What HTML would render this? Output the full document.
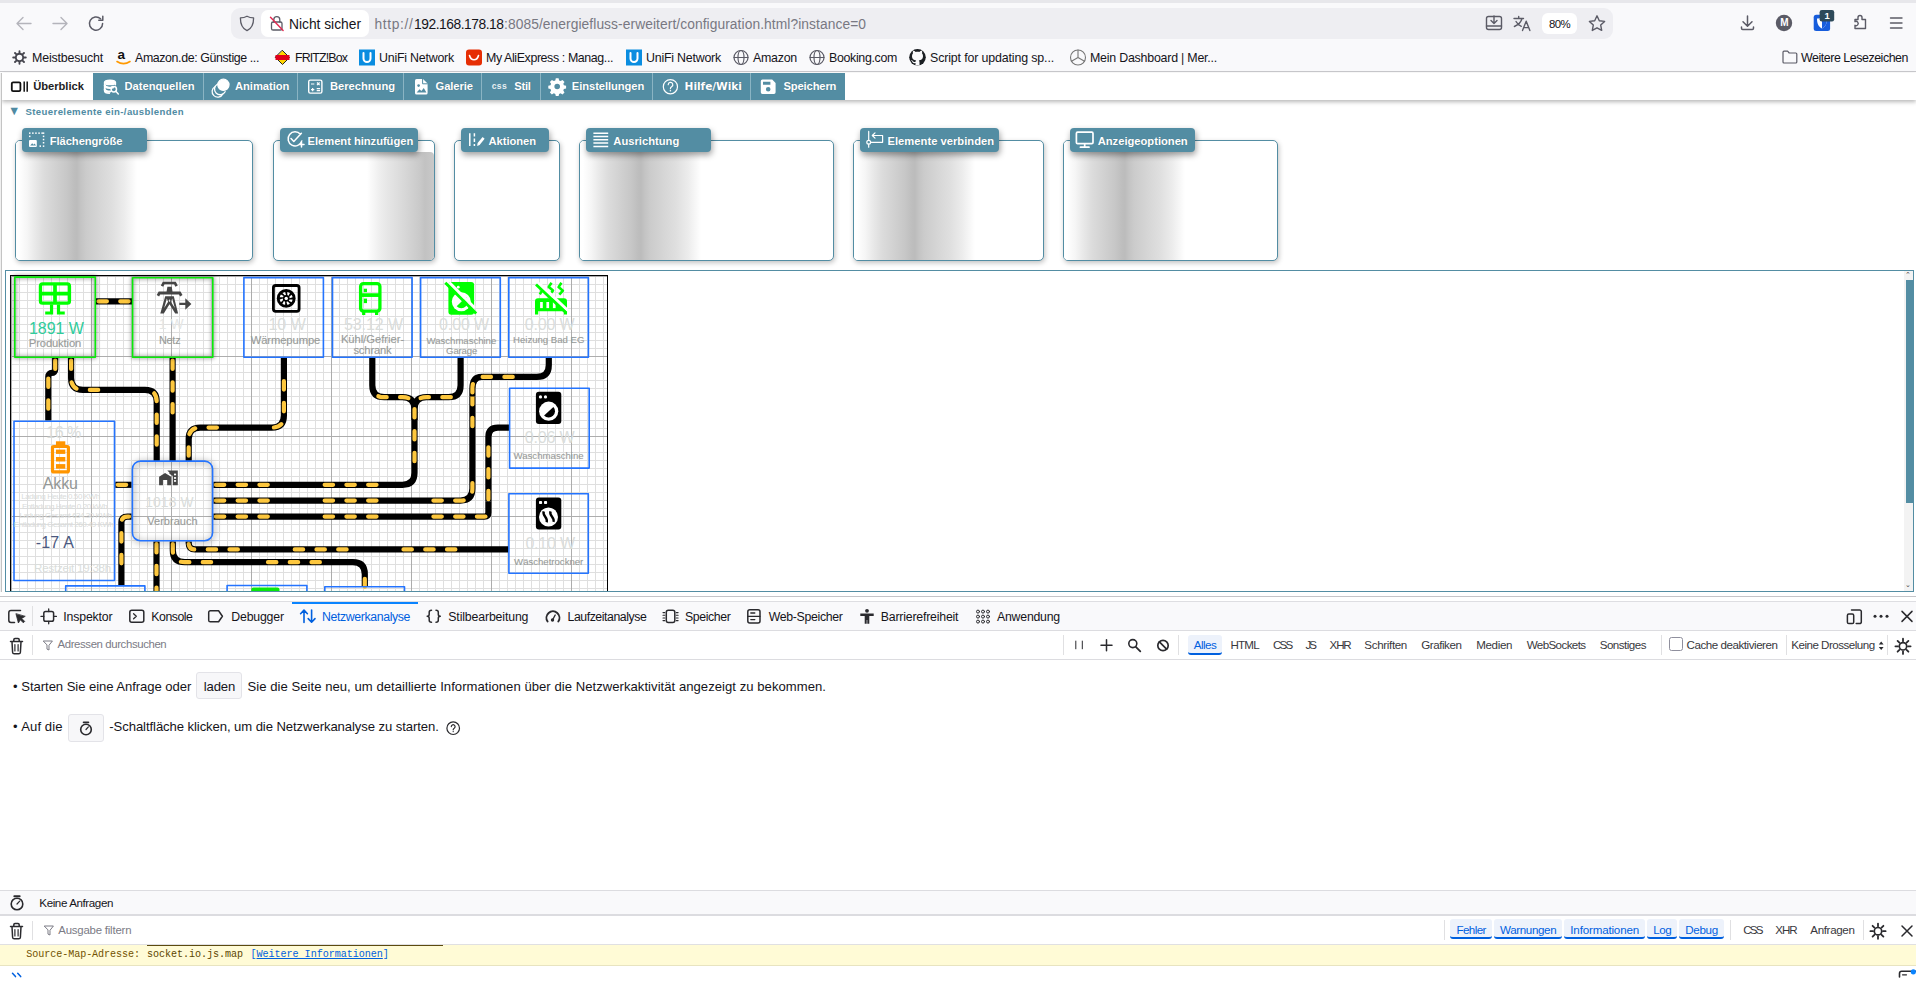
<!DOCTYPE html>
<html lang="de"><head><meta charset="utf-8"><title>energiefluss-erweitert</title>
<style>
html,body{margin:0;padding:0;}
body{width:1916px;height:997px;overflow:hidden;background:#fff;position:relative;font-family:"Liberation Sans", "DejaVu Sans", sans-serif;}
svg{position:absolute;overflow:visible;}
.ab{position:absolute;}
</style></head><body>
<div style="position:absolute;left:0px;top:0px;width:1916px;height:72px;background:#f9f9fb;"></div>
<div style="position:absolute;left:0px;top:0px;width:1916px;height:3px;background:#e7e7eb;"></div>
<div style="position:absolute;left:0px;top:71.4px;width:1916px;height:1.5px;background:#c9c9cd;"></div>
<div style="position:absolute;left:231px;top:8px;width:1382px;height:31px;background:#eeeef2;border-radius:9px;"></div>
<div style="position:absolute;left:261px;top:10px;width:108px;height:27px;background:#fff;border-radius:7px;"></div>
<div style="position:absolute;left:1542px;top:13px;width:35px;height:21px;background:#fff;border-radius:6px;"></div>
<div style="position:absolute;left:0px;top:72px;width:1916px;height:524px;background:#fff;"></div>
<div style="position:absolute;left:2px;top:73px;width:1914px;height:27px;background:#fff;box-shadow:0 2px 4px rgba(0,0,0,.28);"></div>
<div style="position:absolute;left:93px;top:73px;width:752px;height:27px;background:#538da3;"></div>
<div style="position:absolute;left:0px;top:72.8px;width:1.2px;height:523px;background:#f0f0f0;"></div>
<div style="position:absolute;left:1.1px;top:72.8px;width:0.9px;height:523px;background:#c4c4c4;"></div>
<div style="position:absolute;left:0px;top:596px;width:1916px;height:401px;background:#fff;"></div>
<div style="position:absolute;left:0px;top:596px;width:1916px;height:1.3px;background:#c4c4c8;"></div>
<div style="position:absolute;left:0px;top:600.5px;width:1916px;height:1px;background:#dedee2;"></div>
<div style="position:absolute;left:0px;top:601.5px;width:1916px;height:28.5px;background:#f9f9fb;"></div>
<div style="position:absolute;left:0px;top:630px;width:1916px;height:1px;background:#dcdce0;"></div>
<div style="position:absolute;left:0px;top:659px;width:1916px;height:1px;background:#dcdce0;"></div>
<div style="position:absolute;left:0px;top:890px;width:1916px;height:25px;background:#f9f9fb;border-top:1px solid #dcdce0;"></div>
<div style="position:absolute;left:0px;top:914px;width:1916px;height:2px;background:#dcdce0;"></div>
<div style="position:absolute;left:0px;top:944px;width:1916px;height:1px;background:#e0e0e2;"></div>
<div style="position:absolute;left:0px;top:945px;width:1916px;height:20px;background:#fffbd6;"></div>
<div style="position:absolute;left:0px;top:965px;width:1916px;height:1px;background:#e8e4c0;"></div>
<span style="position:absolute;top:17.32px;font-size:13.8px;line-height:16.56px;color:#15141a;white-space:pre;letter-spacing:-0.007px;left:289px;">Nicht sicher</span>
<span style="position:absolute;top:17.32px;font-size:13.8px;line-height:16.56px;color:#787882;white-space:pre;letter-spacing:0.641px;left:374.5px;">http://</span>
<span style="position:absolute;top:17.32px;font-size:13.8px;line-height:16.56px;color:#15141a;white-space:pre;letter-spacing:-0.458px;left:414px;">192.168.178.18</span>
<span style="position:absolute;top:17.32px;font-size:13.8px;line-height:16.56px;color:#787882;white-space:pre;letter-spacing:0.073px;left:504px;">:8085/energiefluss-erweitert/configuration.html?instance=0</span>
<span style="position:absolute;top:17.76px;font-size:11.4px;line-height:13.68px;color:#15141a;white-space:pre;letter-spacing:-0.604px;left:1549px;">80%</span>
<span style="position:absolute;top:51.06px;font-size:12.4px;line-height:14.88px;color:#15141a;white-space:pre;letter-spacing:-0.168px;left:32px;">Meistbesucht</span>
<span style="position:absolute;top:51.06px;font-size:12.4px;line-height:14.88px;color:#15141a;white-space:pre;letter-spacing:-0.389px;left:135px;">Amazon.de: Günstige ...</span>
<span style="position:absolute;top:51.06px;font-size:12.4px;line-height:14.88px;color:#15141a;white-space:pre;letter-spacing:-0.877px;left:295px;">FRITZ!Box</span>
<span style="position:absolute;top:51.06px;font-size:12.4px;line-height:14.88px;color:#15141a;white-space:pre;letter-spacing:-0.216px;left:379px;">UniFi Network</span>
<span style="position:absolute;top:51.06px;font-size:12.4px;line-height:14.88px;color:#15141a;white-space:pre;letter-spacing:-0.390px;left:486px;">My AliExpress : Manag...</span>
<span style="position:absolute;top:51.06px;font-size:12.4px;line-height:14.88px;color:#15141a;white-space:pre;letter-spacing:-0.216px;left:646px;">UniFi Network</span>
<span style="position:absolute;top:51.06px;font-size:12.4px;line-height:14.88px;color:#15141a;white-space:pre;letter-spacing:-0.245px;left:753px;">Amazon</span>
<span style="position:absolute;top:51.06px;font-size:12.4px;line-height:14.88px;color:#15141a;white-space:pre;letter-spacing:-0.331px;left:829px;">Booking.com</span>
<span style="position:absolute;top:51.06px;font-size:12.4px;line-height:14.88px;color:#15141a;white-space:pre;letter-spacing:-0.137px;left:930px;">Script for updating sp...</span>
<span style="position:absolute;top:51.06px;font-size:12.4px;line-height:14.88px;color:#15141a;white-space:pre;letter-spacing:-0.218px;left:1090px;">Mein Dashboard | Mer...</span>
<span style="position:absolute;top:51.06px;font-size:12.4px;line-height:14.88px;color:#15141a;white-space:pre;letter-spacing:-0.447px;left:1801px;">Weitere Lesezeichen</span>
<svg style="left:0;top:0" width="1916" height="72" viewBox="0 0 1916 72" fill="none" stroke-linecap="round" stroke-linejoin="round">
<!-- back / forward / reload -->
<g stroke="#b4b4bb" stroke-width="1.4"><path d="M31 23.5H17.5M23 17.5l-6 6 6 6"/><path d="M53 23.5h13.5M61 17.5l6 6-6 6"/></g>
<g stroke="#5b5b66" stroke-width="1.5"><path d="M102.6 23.5a6.6 6.6 0 1 1-2-4.7"/><path d="M102.8 16.2v4h-4" /></g>
<!-- shield -->
<path d="M247 16.2c2.2 1.3 4.3 1.7 6.6 1.7 0 6-1.6 10.400-6.600 12.700-5-2.300-6.600-6.700-6.600-12.700 2.300 0 4.400-.4 6.600-1.700z" stroke="#5b5b66" stroke-width="1.3"/>
<!-- insecure lock -->
<g stroke="#5b5b66" stroke-width="1.3"><rect x="271.500" y="22" width="10.500" height="8" rx="1.600"/><path d="M273.800 22v-2.300a3 3 0 0 1 6 0V22"/></g>
<path d="M270.500 17.200l12.600 13.200" stroke="#e22850" stroke-width="1.400"/>
<!-- save-to-pocket-like icon -->
<g stroke="#5b5b66" stroke-width="1.400"><rect x="1486.500" y="16.500" width="15" height="13" rx="2"/><path d="M1486.500 26h15M1494 16v7M1491 20.500l3 3 3-3"/></g>
<!-- translate -->
<g stroke="#5b5b66" stroke-width="1.400"><path d="M1514 18.500h9.500M1518.700 16.500v2M1522 18.500c-.8 3.300-3.500 6.200-7.600 8M1516 21.500c1.200 2.200 3 3.800 5.300 4.800"/><path d="M1522.500 30.500l3.700-9.300 3.700 9.300M1523.800 27.600h4.800"/></g>
<!-- star -->
<path d="M1597 15.800l2.300 4.900 5.300.7-3.900 3.700 1 5.300-4.700-2.600-4.700 2.600 1-5.300-3.900-3.700 5.300-.7z" stroke="#5b5b66" stroke-width="1.400"/>
<!-- download -->
<g stroke="#5b5b66" stroke-width="1.500"><path d="M1747.500 16v10M1743 21.800l4.500 4.500 4.500-4.500M1741.500 27v1.300a1.200 1.200 0 0 0 1.200 1.200h9.600a1.200 1.200 0 0 0 1.200-1.200V27"/></g>
<!-- M avatar -->
<circle cx="1784" cy="23" r="8.200" fill="#5b5b66"/>
<!-- bitwarden -->
<rect x="1813.700" y="14.700" width="16.400" height="16.400" rx="2.500" fill="#175ddc"/>
<path d="M1822 17.300c1.700.9 3.200 1.200 5 1.200 0 4.700-1.200 8-5 10-3.800-2-5-5.300-5-10 1.800 0 3.300-.3 5-1.200z" fill="#fff" stroke="none"/>
<path d="M1822 17.300c1.700.9 3.200 1.200 5 1.200 0 4.700-1.200 8-5 10z" fill="#175ddc" stroke="none"/>
<rect x="1819.600" y="10" width="14.600" height="11.400" rx="2.200" fill="#2e4a5a"/>
<!-- puzzle -->
<path d="M1855 21h3v-2a2 2 0 1 1 4 0v2h3.500v9H1855v-3.200a2.100 2.100 0 1 0 0-3.600z" stroke="#5b5b66" stroke-width="1.400" transform="translate(0,-1.5)"/>
<!-- hamburger -->
<path d="M1890.500 18h11.500M1890.500 23h11.500M1890.500 28h11.500" stroke="#5b5b66" stroke-width="1.400"/>
<!-- bookmarks: gear -->
<g transform="translate(19.500,57.500)"><circle r="3.700" stroke="#45454e" stroke-width="1.900"/><g stroke="#45454e" stroke-width="1.900"><path d="M0-6.300v1.600M0 6.300v-1.600M6.300 0h-1.600M-6.300 0h1.600M4.500-4.500l-1.200 1.200M-4.500 4.500l1.200-1.200M4.500 4.500l-1.200-1.200M-4.500-4.500l1.200 1.200"/></g></g>
<!-- amazon a -->
<path d="M117 61.500c4 2.600 9 2.600 13 0" stroke="#f90" stroke-width="1.600"/>
<!-- fritz diamond -->
<path d="M282.500 50.500l7 7-7 7-7-7z" fill="#ffd400" stroke="#222" stroke-width="1"/>
<rect x="275.500" y="55" width="14" height="5" fill="#e2001a" stroke="none"/>
<!-- unifi x2 -->
<rect x="359" y="49.500" width="16" height="16" fill="#0a8de0" stroke="none"/>
<path d="M363.500 53v5.500a3.500 3.500 0 0 0 7 0V53" stroke="#fff" stroke-width="2"/>
<rect x="626" y="49.500" width="16" height="16" fill="#0a8de0" stroke="none"/>
<path d="M630.500 53v5.500a3.500 3.500 0 0 0 7 0V53" stroke="#fff" stroke-width="2"/>
<!-- aliexpress -->
<rect x="466" y="49.500" width="16" height="16" rx="3" fill="#e62e04" stroke="none"/>
<path d="M469.500 55.500c.8 3 2.500 4.300 4.500 4.300s3.700-1.300 4.500-4.300" stroke="#fff" stroke-width="1.600"/>
<!-- globes -->
<g stroke="#5b5b66" stroke-width="1.200"><circle cx="741" cy="57.500" r="7"/><ellipse cx="741" cy="57.500" rx="3" ry="7"/><path d="M734 57.500h14"/>
<circle cx="817" cy="57.500" r="7"/><ellipse cx="817" cy="57.500" rx="3" ry="7"/><path d="M810 57.500h14"/></g>
<!-- github -->
<g transform="translate(917.500,57.300)"><circle r="8.300" fill="#1b1f23" stroke="none"/>
<path fill="#f9f9fb" stroke="none" d="M-2 8v-2.300c-2.400.600-3.200-1-3.400-1.700-.300-.600-.800-1-1.200-1.300.900-.200 1.500.500 1.900 1.100.800 1.200 1.900 1 2.700.600.100-.600.400-1 .700-1.300-2.300-.300-4.200-1.300-4.200-4.500 0-1 .400-1.900 1-2.600-.200-.600-.300-1.500.100-2.500.900 0 1.900.600 2.600 1.100 1.200-.300 2.400-.300 3.600 0 .700-.500 1.700-1.100 2.600-1.100.400 1 .300 1.900.100 2.500.600.700 1 1.600 1 2.600 0 3.200-1.900 4.200-4.200 4.500.400.400.700 1 .700 1.900v3z"/></g>
<!-- mercedes -->
<g stroke="#777" stroke-width="1.100"><circle cx="1078" cy="57.500" r="7.500"/><path d="M1078 50v7.500l6.500 3.700M1078 57.500l-6.500 3.700"/></g>
<!-- folder -->
<path d="M1783 52.200a1 1 0 0 1 1-1h3.600l1.600 1.800h6.600a1 1 0 0 1 1 1v8a1 1 0 0 1-1 1H1784a1 1 0 0 1-1-1z" stroke="#5b5b66" stroke-width="1.200"/>
</svg>
<span style="position:absolute;top:17.2px;font-size:10px;line-height:12.0px;color:#fff;white-space:pre;font-weight:700;left:1780.3px;">M</span>
<span style="position:absolute;top:10.0px;font-size:9.5px;line-height:11.4px;color:#fff;white-space:pre;font-weight:700;left:1824.6px;">1</span>
<span style="position:absolute;top:47.4px;font-size:13.5px;line-height:16.2px;color:#111;white-space:pre;font-weight:700;left:117.5px;">a</span>
<div style="position:absolute;left:203px;top:73px;width:1px;height:27px;background:#8ab4c3;"></div>
<div style="position:absolute;left:297px;top:73px;width:1px;height:27px;background:#8ab4c3;"></div>
<div style="position:absolute;left:403px;top:73px;width:1px;height:27px;background:#8ab4c3;"></div>
<div style="position:absolute;left:481px;top:73px;width:1px;height:27px;background:#8ab4c3;"></div>
<div style="position:absolute;left:540px;top:73px;width:1px;height:27px;background:#8ab4c3;"></div>
<div style="position:absolute;left:652px;top:73px;width:1px;height:27px;background:#8ab4c3;"></div>
<div style="position:absolute;left:750px;top:73px;width:1px;height:27px;background:#8ab4c3;"></div>
<span style="position:absolute;top:79.88px;font-size:11.2px;line-height:13.44px;color:#222;white-space:pre;font-weight:700;letter-spacing:-0.054px;left:33.3px;">Überblick</span>
<span style="position:absolute;top:79.88px;font-size:11.2px;line-height:13.44px;color:#fff;white-space:pre;font-weight:700;letter-spacing:-0.021px;left:124.5px;text-shadow:0 0 1px rgba(0,0,0,.25);">Datenquellen</span>
<span style="position:absolute;top:79.88px;font-size:11.2px;line-height:13.44px;color:#fff;white-space:pre;font-weight:700;letter-spacing:-0.045px;left:235px;text-shadow:0 0 1px rgba(0,0,0,.25);">Animation</span>
<span style="position:absolute;top:79.88px;font-size:11.2px;line-height:13.44px;color:#fff;white-space:pre;font-weight:700;letter-spacing:-0.028px;left:330px;text-shadow:0 0 1px rgba(0,0,0,.25);">Berechnung</span>
<span style="position:absolute;top:79.88px;font-size:11.2px;line-height:13.44px;color:#fff;white-space:pre;font-weight:700;letter-spacing:-0.065px;left:435.5px;text-shadow:0 0 1px rgba(0,0,0,.25);">Galerie</span>
<span style="position:absolute;top:79.88px;font-size:11.2px;line-height:13.44px;color:#fff;white-space:pre;font-weight:700;letter-spacing:-0.302px;left:514.3px;text-shadow:0 0 1px rgba(0,0,0,.25);">Stil</span>
<span style="position:absolute;top:79.88px;font-size:11.2px;line-height:13.44px;color:#fff;white-space:pre;font-weight:700;letter-spacing:-0.066px;left:571.8px;text-shadow:0 0 1px rgba(0,0,0,.25);">Einstellungen</span>
<span style="position:absolute;top:79.88px;font-size:11.2px;line-height:13.44px;color:#fff;white-space:pre;font-weight:700;letter-spacing:-0.144px;left:783.5px;text-shadow:0 0 1px rgba(0,0,0,.25);">Speichern</span>
<span style="position:absolute;top:81.14px;font-size:8.6px;line-height:10.32px;color:#e8f0f3;white-space:pre;font-weight:700;letter-spacing:0.285px;left:491.8px;">css</span>
<span style="position:absolute;top:105.54px;font-size:9.6px;line-height:11.52px;color:#4f8ba3;white-space:pre;font-weight:700;letter-spacing:0.378px;left:25.5px;">Steuerelemente ein-/ausblenden</span>
<span style="position:absolute;top:105.44px;font-size:9.6px;line-height:11.52px;color:#4f8ba3;white-space:pre;font-family:'DejaVu Sans', sans-serif;left:10.5px;">▼</span>
<div style="position:absolute;left:15px;top:140px;width:238px;height:121px;border:1px solid #538da3;border-radius:5px;box-sizing:border-box;box-shadow:1px 2px 5px rgba(0,0,0,.24);overflow:hidden;background:#fff"><div style="position:absolute;left:0;top:0;width:122px;height:120px;background:linear-gradient(90deg,#fff 0px,#fff 3px,#f6f6f6 11px,#e9e9e9 19px,#dcdcdc 28px,#d1d1d1 40px,#c7c7c7 51px,#bebebe 58px,#bcbcbc 61px,#c4c4c4 65px,#cbcbcb 70px,#d6d6d6 84px,#dfdfdf 96px,#ececec 108px,#fff 121px)"></div></div>
<div style="position:absolute;left:22px;top:128px;width:125px;height:23.5px;background:#538da3;border-radius:4px;box-shadow:1px 3px 6px rgba(0,0,0,.38)"></div>
<span style="position:absolute;top:134.98px;font-size:11.2px;line-height:13.44px;color:#fff;white-space:pre;font-weight:700;letter-spacing:-0.055px;left:49.7px;text-shadow:0 0 1px rgba(0,0,0,.25);">Flächengröße</span>
<div style="position:absolute;left:273px;top:140px;width:162px;height:121px;border:1px solid #538da3;border-radius:5px;box-sizing:border-box;box-shadow:1px 2px 5px rgba(0,0,0,.24);overflow:hidden;background:#fff"><div style="position:absolute;left:93px;top:11.2px;width:67px;height:108px;border-radius:0 4px 0 0;background:linear-gradient(90deg,#fff 0px,#efefef 12px,#e6e6e6 21px,#d8d8d8 37px,#c9c9c9 53px,#c2c2c2 58px,#c9c9c9 67px)"></div></div>
<div style="position:absolute;left:280px;top:128px;width:138px;height:23.5px;background:#538da3;border-radius:4px;box-shadow:1px 3px 6px rgba(0,0,0,.38)"></div>
<span style="position:absolute;top:134.98px;font-size:11.2px;line-height:13.44px;color:#fff;white-space:pre;font-weight:700;letter-spacing:-0.038px;left:307.6px;text-shadow:0 0 1px rgba(0,0,0,.25);">Element hinzufügen</span>
<div style="position:absolute;left:454px;top:140px;width:106px;height:121px;border:1px solid #538da3;border-radius:5px;box-sizing:border-box;box-shadow:1px 2px 5px rgba(0,0,0,.24);overflow:hidden;background:#fff"></div>
<div style="position:absolute;left:461px;top:128px;width:88px;height:23.5px;background:#538da3;border-radius:4px;box-shadow:1px 3px 6px rgba(0,0,0,.38)"></div>
<span style="position:absolute;top:134.98px;font-size:11.2px;line-height:13.44px;color:#fff;white-space:pre;font-weight:700;letter-spacing:-0.045px;left:488.5px;text-shadow:0 0 1px rgba(0,0,0,.25);">Aktionen</span>
<div style="position:absolute;left:579px;top:140px;width:255px;height:121px;border:1px solid #538da3;border-radius:5px;box-sizing:border-box;box-shadow:1px 2px 5px rgba(0,0,0,.24);overflow:hidden;background:#fff"><div style="position:absolute;left:0;top:0;width:122px;height:120px;background:linear-gradient(90deg,#fff 0px,#fff 3px,#f6f6f6 11px,#e9e9e9 19px,#dcdcdc 28px,#d1d1d1 40px,#c7c7c7 51px,#bebebe 58px,#bcbcbc 61px,#c4c4c4 65px,#cbcbcb 70px,#d6d6d6 84px,#dfdfdf 96px,#ececec 108px,#fff 121px)"></div></div>
<div style="position:absolute;left:586px;top:128px;width:125px;height:23.5px;background:#538da3;border-radius:4px;box-shadow:1px 3px 6px rgba(0,0,0,.38)"></div>
<span style="position:absolute;top:134.98px;font-size:11.2px;line-height:13.44px;color:#fff;white-space:pre;font-weight:700;letter-spacing:0.010px;left:613.3px;text-shadow:0 0 1px rgba(0,0,0,.25);">Ausrichtung</span>
<div style="position:absolute;left:853px;top:140px;width:191px;height:121px;border:1px solid #538da3;border-radius:5px;box-sizing:border-box;box-shadow:1px 2px 5px rgba(0,0,0,.24);overflow:hidden;background:#fff"><div style="position:absolute;left:0;top:0;width:122px;height:120px;background:linear-gradient(90deg,#fff 0px,#fff 3px,#f6f6f6 11px,#e9e9e9 19px,#dcdcdc 28px,#d1d1d1 40px,#c7c7c7 51px,#bebebe 58px,#bcbcbc 61px,#c4c4c4 65px,#cbcbcb 70px,#d6d6d6 84px,#dfdfdf 96px,#ececec 108px,#fff 121px)"></div></div>
<div style="position:absolute;left:860px;top:128px;width:139.29999999999995px;height:23.5px;background:#538da3;border-radius:4px;box-shadow:1px 3px 6px rgba(0,0,0,.38)"></div>
<span style="position:absolute;top:134.98px;font-size:11.2px;line-height:13.44px;color:#fff;white-space:pre;font-weight:700;letter-spacing:0.015px;left:887.5px;text-shadow:0 0 1px rgba(0,0,0,.25);">Elemente verbinden</span>
<div style="position:absolute;left:1063px;top:140px;width:215px;height:121px;border:1px solid #538da3;border-radius:5px;box-sizing:border-box;box-shadow:1px 2px 5px rgba(0,0,0,.24);overflow:hidden;background:#fff"><div style="position:absolute;left:0;top:0;width:122px;height:120px;background:linear-gradient(90deg,#fff 0px,#fff 3px,#f6f6f6 11px,#e9e9e9 19px,#dcdcdc 28px,#d1d1d1 40px,#c7c7c7 51px,#bebebe 58px,#bcbcbc 61px,#c4c4c4 65px,#cbcbcb 70px,#d6d6d6 84px,#dfdfdf 96px,#ececec 108px,#fff 121px)"></div></div>
<div style="position:absolute;left:1070px;top:128px;width:124.59999999999991px;height:23.5px;background:#538da3;border-radius:4px;box-shadow:1px 3px 6px rgba(0,0,0,.38)"></div>
<span style="position:absolute;top:134.98px;font-size:11.2px;line-height:13.44px;color:#fff;white-space:pre;font-weight:700;letter-spacing:-0.008px;left:1097.7px;text-shadow:0 0 1px rgba(0,0,0,.25);">Anzeigeoptionen</span>
<div style="position:absolute;left:5px;top:270px;width:1909px;height:322px;border:1px solid #538da3;box-sizing:border-box;background:#fff;"></div>
<div style="position:absolute;left:1904px;top:271px;width:9px;height:320px;background:#f3f3f3;"></div>
<div style="position:absolute;left:1905.5px;top:279.5px;width:8px;height:223px;background:#538da3;"></div>
<span style="position:absolute;top:271.3px;font-size:7px;line-height:8.4px;color:#444;white-space:pre;font-family:'DejaVu Sans', sans-serif;left:1905px;">⌃</span>
<span style="position:absolute;top:580.8px;font-size:7px;line-height:8.4px;color:#444;white-space:pre;font-family:'DejaVu Sans', sans-serif;left:1905px;">⌄</span>
<span style="position:absolute;top:80.44px;font-size:10.6px;line-height:12.72px;color:#fff;white-space:pre;font-weight:700;font-family:'DejaVu Sans', sans-serif;letter-spacing:-0.050px;left:684.6px;text-shadow:0 0 1px rgba(0,0,0,.25);">Hilfe/Wiki</span>
<svg style="left:0;top:72px" width="1300" height="90" viewBox="0 72 1300 90" fill="none" stroke-linecap="round" stroke-linejoin="round">
<!-- ueberblick -->
<g stroke="#111" stroke-width="1.8"><rect x="11.800" y="82.300" width="8.600" height="8.800" rx="1.300"/><path d="M24.200 81.500v10.300M27.200 81.500v10.300" stroke-width="1.500" stroke-linecap="butt"/></g>
<!-- datenquellen: db + magnifier -->
<g stroke="#fff" stroke-width="1.500"><ellipse cx="110" cy="82.400" rx="5.400" ry="2.200" fill="#fff"/><path d="M104.900 85.600c0 1.200 2.300 2.200 5.100 2.200 1 0 2-.1 2.800-.4M104.900 89.400c0 1.200 2.300 2.200 5.100 2.200" stroke-width="2.300"/><path d="M104.600 82.400v8.600c0 1.200 2.200 2.200 4.800 2.200M115.400 82.400v2.400"/><circle cx="113.800" cy="89.200" r="2.700"/><path d="M115.800 91.300l2.500 2.600"/></g>
<!-- animation: overlapping circles -->
<g stroke="#fff" stroke-width="1.300"><circle cx="223.400" cy="84.800" r="5.600" fill="#fff"/><path d="M217.300 84.300a5.600 5.600 0 1 0 7.800 7.400"/><path d="M214.900 86.700a5.600 5.600 0 1 0 7.800 7.400"/></g>
<!-- berechnung: calculator -->
<g stroke="#fff" stroke-width="1.400"><rect x="308.700" y="80.100" width="13.200" height="13" rx="1.600"/></g>
<g stroke="#fff" stroke-width="1.200" stroke-linecap="butt"><path d="M311 84h3.300M317 82.500l2.600 2.600M319.600 82.500l-2.600 2.600M311 89.600h3.300M312.650 87.900v3.400M316.700 88.600h3.400M316.700 90.600h3.400"/></g>
<!-- galerie: file w/ picture -->
<path d="M416.600 79h6.400l4.600 4.600v9.300a1.600 1.600 0 0 1-1.600 1.600h-9.400a1.600 1.600 0 0 1-1.600-1.600V80.600a1.600 1.600 0 0 1 1.600-1.600z" fill="#fff"/>
<path d="M422.600 79.200v4.600h4.800" stroke="#538da3" stroke-width="1"/>
<circle cx="418.600" cy="85.600" r="1.300" fill="#538da3"/><path d="M416.600 92.600l3-3.400 1.800 1.800 2.400-3 2.600 4.600z" fill="#538da3"/>
<!-- gear -->
<g transform="translate(557.200,86.500)"><path fill="#fff" fill-rule="evenodd" d="M-1.400-8.200h2.800l.5 2.200 1.500.6 1.900-1.200 2 2-1.200 1.900.6 1.500 2.200.5v2.800l-2.200.5-.6 1.500 1.200 1.900-2 2-1.900-1.200-1.500.6-.5 2.200h-2.800l-.5-2.200-1.500-.6-1.900 1.200-2-2 1.200-1.900-.6-1.500-2.200-.5v-2.800l2.200-.5.6-1.500-1.200-1.900 2-2 1.900 1.200 1.500-.6zM0-2.800a2.800 2.800 0 1 0 0 5.600 2.800 2.800 0 0 0 0-5.600z"/></g>
<!-- help -->
<g stroke="#fff" stroke-width="1.200"><circle cx="670.400" cy="86.700" r="7.100"/><path d="M668.200 84.700a2.300 2.300 0 1 1 3.400 2c-.8.500-1.200 1-1.200 2"/></g><circle cx="670.400" cy="90.800" r=".8" fill="#fff"/>
<!-- save -->
<path fill="#fff" fill-rule="evenodd" d="M762.400 79.600h9.800l3.400 3.400v9.300a1.600 1.600 0 0 1-1.600 1.600h-11.600a1.600 1.600 0 0 1-1.600-1.600V81.200a1.600 1.600 0 0 1 1.600-1.600zM763 81.700v3h7.400v-3zM768.200 87a2.300 2.300 0 1 0 0 4.600 2.300 2.300 0 0 0 0-4.600z"/>

<!-- flaechengroesse: photo_size_select_small -->
<g fill="#fff"><rect x="29" y="140" width="7.800" height="7" rx="1"/>
<rect x="29" y="132.400" width="1.500" height="1.500"/><rect x="32.100" y="132.400" width="1.500" height="1.500"/><rect x="35.200" y="132.400" width="1.500" height="1.500"/><rect x="38.300" y="132.400" width="1.500" height="1.500"/><rect x="41.400" y="132.400" width="1.500" height="1.500"/><rect x="42.800" y="132.400" width="1.500" height="1.500"/>
<rect x="42.800" y="135.600" width="1.500" height="1.500"/><rect x="42.800" y="138.800" width="1.500" height="1.500"/><rect x="42.800" y="142" width="1.500" height="1.500"/><rect x="42.800" y="145.400" width="1.500" height="1.500"/><rect x="39.500" y="145.400" width="1.500" height="1.500"/><rect x="29" y="135.600" width="1.500" height="1.500"/></g>
<path d="M30.200 145.600l2-2.400 1.400 1.600 1-1.200 1.400 2z" fill="#538da3"/>
<!-- element hinzufuegen: add_task -->
<g stroke="#fff" stroke-width="1.500"><path d="M300.400 134.300a7 7 0 1 0 1.400 6.600M291 138.600l2.800 2.900 7.600-8.200M301.500 142v5M299 144.500h5"/></g>
<!-- aktionen -->
<g stroke="#fff" stroke-width="1.500" stroke-linecap="butt"><path d="M469.800 133.200v12.800"/><path d="M474.400 133.200v12.800" stroke-dasharray="3.400 2"/></g>
<path d="M477.200 146l.4-2.900 5-6.200 2 1.800-5 6.200z" fill="#fff"/>
<!-- ausrichtung -->
<g stroke="#fff" stroke-width="1.500" stroke-linecap="butt"><path d="M593.400 133.200h14.800M593.400 136.500h14.800M593.400 139.800h14.800M593.400 143.100h14.800M593.400 146.400h14.800"/></g>
<!-- elemente verbinden -->
<g stroke="#fff" stroke-width="1.200"><path d="M868.700 131.400v9M868.700 144.200v3"/><circle cx="868.700" cy="142.300" r="1.900"/><path d="M870.800 142.300h11.800v-6.800h-10.300M875 132.800l-2.700 2.700 2.700 2.700"/></g>
<!-- anzeigeoptionen: monitor -->
<g stroke="#fff" stroke-width="1.700"><rect x="1076.400" y="132.200" width="16.600" height="11.400" rx="1.200"/><path d="M1084.700 144v2.800M1080.400 147.200h8.600"/></g>
</svg>
<div style="position:absolute;left:9.8px;top:275px;width:598.6px;height:316.5px;box-sizing:border-box;border:1.6px solid #000;border-bottom:none;"></div>
<div style="position:absolute;left:11px;top:276px;width:596px;height:315.5px;background-image:linear-gradient(to right,#adadad 1px,transparent 1px),linear-gradient(to bottom,#adadad 1px,transparent 1px),linear-gradient(to right,#dfdfdf 1px,transparent 1px),linear-gradient(to bottom,#dfdfdf 1px,transparent 1px);background-size:80px 80px,80px 80px,8px 8px,8px 8px;"></div>
<svg style="left:0;top:0;overflow:hidden" width="1916" height="591.5" viewBox="0 0 1916 591.5" fill="none" stroke-linejoin="round">
<path d="M96 301.3H132" stroke="#000" stroke-width="6.2"/>
<path d="M96 301.3H132" stroke="#fdc73e" stroke-width="4.2" stroke-linecap="round" stroke-dasharray="8.4 13.35 8.4 13.35 8.4 56.85" stroke-dashoffset="-2.50"/>
<path d="M55.2 358V369.5a3.45 3.45 0 0 1-3.45 3.45a3.45 3.45 0 0 0-3.45 3.45V420.5" stroke="#000" stroke-width="6.2"/>
<path d="M55.2 358V369.5a3.45 3.45 0 0 1-3.45 3.45a3.45 3.45 0 0 0-3.45 3.45V420.5" stroke="#fdc73e" stroke-width="4.2" stroke-linecap="round" stroke-dasharray="8.4 13.35 8.4 13.35 8.4 56.85" stroke-dashoffset="-2.50"/>
<path d="M71.1 358V378Q71.1 389.9 83 389.9H145Q156.7 389.9 156.7 401.6V461" stroke="#000" stroke-width="6.2"/>
<path d="M71.1 358V378Q71.1 389.9 83 389.9H145Q156.7 389.9 156.7 401.6V461" stroke="#fdc73e" stroke-width="4.2" stroke-linecap="round" stroke-dasharray="8.4 13.35 8.4 13.35 8.4 56.85" stroke-dashoffset="-2.50"/>
<path d="M172.6 358V461" stroke="#000" stroke-width="6.2"/>
<path d="M172.6 358V461" stroke="#fdc73e" stroke-width="4.2" stroke-linecap="round" stroke-dasharray="8.4 13.35 8.4 13.35 8.4 56.85" stroke-dashoffset="-2.50"/>
<path d="M188.7 461V439Q188.7 427.6 200.2 427.6H272Q283.9 427.6 283.9 415.5V358" stroke="#000" stroke-width="6.2"/>
<path d="M188.7 461V439Q188.7 427.6 200.2 427.6H272Q283.9 427.6 283.9 415.5V358" stroke="#fdc73e" stroke-width="4.2" stroke-linecap="round" stroke-dasharray="8.4 13.35 8.4 13.35 8.4 56.85" stroke-dashoffset="-5.30"/>
<path d="M213.4 484.8H402.5Q414.5 484.8 414.5 472.8V420" stroke="#000" stroke-width="6.2"/>
<path d="M213.4 484.8H402.5Q414.5 484.8 414.5 472.8V420" stroke="#fdc73e" stroke-width="4.2" stroke-linecap="round" stroke-dasharray="8.4 13.35 8.4 13.35 8.4 56.85" stroke-dashoffset="-2.50"/>
<path d="M414.5 420V409Q414.5 397.2 402.5 397.2H384.3Q372.3 397.2 372.3 385.2V358" stroke="#000" stroke-width="6.2"/>
<path d="M414.5 420V409Q414.5 397.2 402.5 397.2H384.3Q372.3 397.2 372.3 385.2V358" stroke="#fdc73e" stroke-width="4.2" stroke-linecap="round" stroke-dasharray="8.4 13.35 8.4 13.35 8.4 56.85" stroke-dashoffset="-2.50"/>
<path d="M414.5 420V409Q414.5 397.2 426.5 397.2H448.6Q460.6 397.2 460.6 385.2V358" stroke="#000" stroke-width="6.2"/>
<path d="M414.5 420V409Q414.5 397.2 426.5 397.2H448.6Q460.6 397.2 460.6 385.2V358" stroke="#fdc73e" stroke-width="4.2" stroke-linecap="round" stroke-dasharray="8.4 13.35 8.4 13.35 8.4 56.85" stroke-dashoffset="-2.50"/>
<path d="M213.4 500.6H460.4Q472.4 500.6 472.4 488.6V396.4" stroke="#000" stroke-width="6.2"/>
<path d="M213.4 500.6H460.4Q472.4 500.6 472.4 488.6V396.4" stroke="#fdc73e" stroke-width="4.2" stroke-linecap="round" stroke-dasharray="8.4 13.35 8.4 13.35 8.4 56.85" stroke-dashoffset="-2.50"/>
<path d="M472.4 396.4V388.9Q472.4 376.9 481.5 376.9H536.8Q548.8 376.9 548.8 364.9V358" stroke="#000" stroke-width="6.2"/>
<path d="M472.4 396.4V388.9Q472.4 376.9 481.5 376.9H536.8Q548.8 376.9 548.8 364.9V358" stroke="#fdc73e" stroke-width="4.2" stroke-linecap="round" stroke-dasharray="8.4 13.35 8.4 13.35 8.4 56.85" stroke-dashoffset="-3.95"/>
<path d="M213.4 516.6H484.4Q488.4 516.6 488.4 512.6V501.7" stroke="#000" stroke-width="6.2"/>
<path d="M213.4 516.6H484.4Q488.4 516.6 488.4 512.6V501.7" stroke="#fdc73e" stroke-width="4.2" stroke-linecap="round" stroke-dasharray="8.4 13.35 8.4 13.35 8.4 56.85" stroke-dashoffset="-2.50"/>
<path d="M488.4 501.7V437.2Q488.4 427.7 497.9 427.7H509" stroke="#000" stroke-width="6.2"/>
<path d="M488.4 501.7V437.2Q488.4 427.7 497.9 427.7H509" stroke="#fdc73e" stroke-width="4.2" stroke-linecap="round" stroke-dasharray="8.4 13.35 8.4 13.35 8.4 56.85" stroke-dashoffset="-2.50"/>
<path d="M188.7 541.5V543Q188.7 549.4 195.1 549.4H508.5" stroke="#000" stroke-width="6.2"/>
<path d="M188.7 541.5V543Q188.7 549.4 195.1 549.4H508.5" stroke="#fdc73e" stroke-width="4.2" stroke-linecap="round" stroke-dasharray="8.4 13.35 8.4 13.35 8.4 56.85" stroke-dashoffset="-2.50"/>
<path d="M172.8 541.5V550.2Q172.8 562.2 184.8 562.2H352.8Q364.8 562.2 364.8 574.2V587" stroke="#000" stroke-width="6.2"/>
<path d="M172.8 541.5V550.2Q172.8 562.2 184.8 562.2H352.8Q364.8 562.2 364.8 574.2V587" stroke="#fdc73e" stroke-width="4.2" stroke-linecap="round" stroke-dasharray="8.4 13.35 8.4 13.35 8.4 56.85" stroke-dashoffset="-2.50"/>
<path d="M156.5 541.5V591" stroke="#000" stroke-width="6.2"/>
<path d="M156.5 541.5V591" stroke="#fdc73e" stroke-width="4.2" stroke-linecap="round" stroke-dasharray="8.4 13.35 8.4 13.35 8.4 56.85" stroke-dashoffset="-2.50"/>
<path d="M115.3 484.8H131.6" stroke="#000" stroke-width="6.2"/>
<path d="M115.3 484.8H131.6" stroke="#fdc73e" stroke-width="4.2" stroke-linecap="round" stroke-dasharray="8.4 13.35 8.4 13.35 8.4 56.85" stroke-dashoffset="-2.50"/>
<path d="M131.6 516.6H127.4Q121.4 516.6 121.4 522.6V585" stroke="#000" stroke-width="6.2"/>
<path d="M131.6 516.6H127.4Q121.4 516.6 121.4 522.6V585" stroke="#fdc73e" stroke-width="4.2" stroke-linecap="round" stroke-dasharray="8.4 13.35 8.4 13.35 8.4 56.85" stroke-dashoffset="-2.50"/>
<rect x="14.8" y="277.1" width="80.5" height="80.1" rx="0" stroke="#08ec08" stroke-width="1.6" style="filter:drop-shadow(0.8px 0.8px 2.2px rgba(0,0,0,.75))"/>
<rect x="132.6" y="277.8" width="80.2" height="79.4" rx="0" stroke="#08ec08" stroke-width="1.6" style="filter:drop-shadow(0.8px 0.8px 2.2px rgba(0,0,0,.75))"/>
<rect x="243.9" y="277.6" width="79.5" height="79.6" rx="0" stroke="#2474ff" stroke-width="1.6" />
<rect x="332.5" y="277.6" width="79.6" height="79.6" rx="0" stroke="#2474ff" stroke-width="1.6" />
<rect x="420.6" y="277.6" width="79.7" height="79.6" rx="0" stroke="#2474ff" stroke-width="1.6" />
<rect x="508.8" y="277.6" width="79.6" height="79.6" rx="0" stroke="#2474ff" stroke-width="1.6" />
<rect x="509.6" y="388.2" width="79.6" height="79.9" rx="0" stroke="#2474ff" stroke-width="1.6" />
<rect x="508.9" y="493.7" width="79.4" height="79.6" rx="0" stroke="#2474ff" stroke-width="1.6" />
<rect x="14.0" y="421.2" width="100.5" height="159.3" rx="0" stroke="#2474ff" stroke-width="1.6" />
<rect x="132.4" y="461.1" width="80.2" height="79.6" rx="8" stroke="#2474ff" stroke-width="1.6" style="filter:drop-shadow(1px 1.5px 3px rgba(0,0,0,.6))"/>
<rect x="65.7" y="585.9" width="79.2" height="13.3" rx="0" stroke="#2474ff" stroke-width="1.6" />
<rect x="227.1" y="585.5" width="79.8" height="13.7" rx="0" stroke="#2474ff" stroke-width="1.6" />
<rect x="324.8" y="586.8" width="79.7" height="12.4" rx="0" stroke="#2474ff" stroke-width="1.6" />
<path d="M251.3 591v-1.5a2 2 0 0 1 2-2h24.2a2 2 0 0 1 2 2v1.5z" fill="#0be80b"/>
</svg>
<div style="position:absolute;left:0px;top:592px;width:1916px;height:4px;background:#fff;"></div>
<div style="position:absolute;left:5px;top:591px;width:1909px;height:1px;background:#538da3;"></div>
<span style="position:absolute;top:319.2px;font-size:16px;line-height:19.2px;color:#2fcc9b;white-space:pre;letter-spacing:-0.040px;left:29.0px;">1891 W</span>
<span style="position:absolute;top:336.58px;font-size:11.2px;line-height:13.44px;color:#999c9a;white-space:pre;letter-spacing:-0.110px;left:28.8px;text-shadow:0 0 1px rgba(0,0,0,.12);">Produktion</span>
<span style="position:absolute;top:317.12px;font-size:13.8px;line-height:16.56px;color:#e4e6e5;white-space:pre;letter-spacing:0.090px;left:158.8px;">1 W</span>
<span style="position:absolute;top:333.62px;font-size:10.8px;line-height:12.96px;color:#999c9a;white-space:pre;letter-spacing:-0.176px;left:158.9px;text-shadow:0 0 1px rgba(0,0,0,.12);">Netz</span>
<span style="position:absolute;top:314.9px;font-size:16px;line-height:19.2px;color:#dadddb;white-space:pre;letter-spacing:0.014px;left:268.4px;">10 W</span>
<span style="position:absolute;top:333.58px;font-size:11.2px;line-height:13.44px;color:#999c9a;white-space:pre;letter-spacing:-0.077px;left:250.7px;text-shadow:0 0 1px rgba(0,0,0,.12);">Wärmepumpe</span>
<span style="position:absolute;top:314.9px;font-size:16px;line-height:19.2px;color:#dadddb;white-space:pre;letter-spacing:-0.099px;left:344px;">53.12 W</span>
<span style="position:absolute;top:332.78px;font-size:11.2px;line-height:13.44px;color:#999c9a;white-space:pre;letter-spacing:-0.009px;left:340.9px;text-shadow:0 0 1px rgba(0,0,0,.12);">Kühl/Gefrier-</span>
<span style="position:absolute;top:343.88px;font-size:11.2px;line-height:13.44px;color:#999c9a;white-space:pre;letter-spacing:-0.141px;left:353.4px;text-shadow:0 0 1px rgba(0,0,0,.12);">schrank</span>
<span style="position:absolute;top:314.9px;font-size:16px;line-height:19.2px;color:#dadddb;white-space:pre;letter-spacing:-0.131px;left:439.1px;">0.00 W</span>
<span style="position:absolute;top:334.74px;font-size:9.6px;line-height:11.52px;color:#999c9a;white-space:pre;letter-spacing:-0.033px;left:426.6px;text-shadow:0 0 1px rgba(0,0,0,.12);">Waschmaschine</span>
<span style="position:absolute;top:344.74px;font-size:9.6px;line-height:11.52px;color:#999c9a;white-space:pre;letter-spacing:-0.167px;left:446.1px;text-shadow:0 0 1px rgba(0,0,0,.12);">Garage</span>
<span style="position:absolute;top:314.9px;font-size:16px;line-height:19.2px;color:#dadddb;white-space:pre;letter-spacing:-0.165px;left:524.7px;">0.00 W</span>
<span style="position:absolute;top:333.74px;font-size:9.6px;line-height:11.52px;color:#999c9a;white-space:pre;left:513px;text-shadow:0 0 1px rgba(0,0,0,.12);">Heizung Bad EG</span>
<span style="position:absolute;top:428.4px;font-size:16px;line-height:19.2px;color:#dadddb;white-space:pre;letter-spacing:-0.198px;left:524.8px;">0.06 W</span>
<span style="position:absolute;top:449.84px;font-size:9.6px;line-height:11.52px;color:#999c9a;white-space:pre;letter-spacing:0.013px;left:513.5px;text-shadow:0 0 1px rgba(0,0,0,.12);">Waschmaschine</span>
<span style="position:absolute;top:534.3px;font-size:16px;line-height:19.2px;color:#dadddb;white-space:pre;letter-spacing:-0.198px;left:525.4px;">0.10 W</span>
<span style="position:absolute;top:556.14px;font-size:9.6px;line-height:11.52px;color:#999c9a;white-space:pre;letter-spacing:-0.008px;left:514.1px;text-shadow:0 0 1px rgba(0,0,0,.12);">Wäschetrockner</span>
<span style="position:absolute;top:422.8px;font-size:16px;line-height:19.2px;color:#dadddb;white-space:pre;letter-spacing:-0.517px;left:46.3px;">16 %</span>
<span style="position:absolute;top:473.5px;font-size:16px;line-height:19.2px;color:#939795;white-space:pre;letter-spacing:-0.120px;left:42.8px;">Akku</span>
<span style="position:absolute;top:491.8px;font-size:8px;line-height:9.6px;color:#d9dbda;white-space:pre;letter-spacing:-0.439px;left:21.3px;">Ladung Heute 0.50 KWh</span>
<span style="position:absolute;top:501.6px;font-size:8px;line-height:9.6px;color:#d9dbda;white-space:pre;letter-spacing:-0.430px;left:21.9px;">Entladung Heute 0.20 kWh</span>
<span style="position:absolute;top:510.6px;font-size:8px;line-height:9.6px;color:#d9dbda;white-space:pre;letter-spacing:-0.458px;left:19.4px;">Ladung Gesamt 634.30 KWh</span>
<span style="position:absolute;top:520.0px;font-size:8px;line-height:9.6px;color:#d9dbda;white-space:pre;letter-spacing:-0.475px;left:13.8px;">Entladung Gesamt 260.49 KWh</span>
<span style="position:absolute;top:532.5px;font-size:16px;line-height:19.2px;color:#4b5980;white-space:pre;letter-spacing:0.188px;left:35.7px;">-17 A</span>
<span style="position:absolute;top:562.0px;font-size:11.5px;line-height:13.8px;color:#dadddb;white-space:pre;letter-spacing:-0.201px;left:34.1px;">Restzeit 19:38h</span>
<span style="position:absolute;top:494.72px;font-size:13.8px;line-height:16.56px;color:#dadddb;white-space:pre;letter-spacing:0.140px;left:145.2px;">1018 W</span>
<span style="position:absolute;top:514.6px;font-size:11px;line-height:13.2px;color:#999c9a;white-space:pre;letter-spacing:0.016px;left:147.3px;text-shadow:0 0 1px rgba(0,0,0,.12);">Verbrauch</span>
<svg style="left:0;top:0;overflow:hidden" width="620" height="591" viewBox="0 0 620 591" fill="none">
<!-- solar -->
<g stroke="#00ff00" fill="none"><rect x="40.450" y="283.800" width="29" height="19.300" rx="2.200" stroke-width="3.300"/><path d="M55 283.800v19.300M40.450 293.600h29" stroke-width="3.700"/>
<path d="M51.550 304.500v8.500H45.200M58.500 304.500v8.500H64.750" stroke-width="3.200"/></g>
<!-- transmission tower export -->
<g fill="#454545"><path d="M162.800 281.700h13l2 3.700-2.400 1.300-1.300-2.400h-9.600l-1.300 2.400-2.400-1.300z"/><path d="M167.400 286.800h4.300l.8 4.700h8l2 3.600-2.400 1.300-1.100-2h-18.800l-1.100 2-2.400-1.300 2-3.600h7.900z"/>
<path d="M165.200 296.200h8.600l4.300 17.300h-2.900l-5.700-9.300-5.700 9.300h-3.500zM166.800 298.400l-2.600 9.600 3.900-6.300zM172.200 298.400l-1.300 3.300 3.900 6.300zM169.500 299.200l-.9 1.500.9 1.400.9-1.400z" fill-rule="evenodd"/>
<path d="M179.300 302.800h6v-4.600l6.100 5.700-6.100 5.900v-4.700h-6z"/></g>
<!-- heat pump -->
<rect x="273.400" y="285.500" width="25.700" height="25.900" rx="2.300" stroke="#000" stroke-width="2.800"/>
<circle cx="286.200" cy="298.400" r="9.400" fill="#000"/>
<g fill="#fff"><circle cx="286.200" cy="298.400" r="1.700"/>
<g transform="translate(286.200,298.400)"><path d="M1.1-3.3L1.1-6.4A6.5 6.5 0 0 1 3.8-5.3L2.3-2.6z" transform="rotate(0)"/><path d="M1.1-3.3L1.1-6.4A6.5 6.5 0 0 1 3.8-5.3L2.3-2.6z" transform="rotate(45)"/><path d="M1.1-3.3L1.1-6.4A6.5 6.5 0 0 1 3.8-5.3L2.3-2.6z" transform="rotate(90)"/><path d="M1.1-3.3L1.1-6.4A6.5 6.5 0 0 1 3.8-5.3L2.3-2.6z" transform="rotate(135)"/><path d="M1.1-3.3L1.1-6.4A6.5 6.5 0 0 1 3.8-5.3L2.3-2.6z" transform="rotate(180)"/><path d="M1.1-3.3L1.1-6.4A6.5 6.5 0 0 1 3.8-5.3L2.3-2.6z" transform="rotate(225)"/><path d="M1.1-3.3L1.1-6.4A6.5 6.5 0 0 1 3.8-5.3L2.3-2.6z" transform="rotate(270)"/><path d="M1.1-3.3L1.1-6.4A6.5 6.5 0 0 1 3.8-5.3L2.3-2.6z" transform="rotate(315)"/></g></g>
<!-- fridge -->
<g stroke="#00ff00"><rect x="360.600" y="283.600" width="19.300" height="27.500" rx="2.800" stroke-width="3.300"/><path d="M360.600 295.100h19.300" stroke-width="3.700"/></g>
<g fill="#00ff00"><rect x="363.800" y="288.700" width="3.200" height="3.400"/><rect x="363.800" y="298.600" width="3.200" height="4.500"/><rect x="362.100" y="312" width="3.200" height="3"/><rect x="375" y="312" width="3.200" height="3"/></g>
<!-- washing machine off (garage) -->
<rect x="448.400" y="282" width="25.700" height="32.800" rx="3" fill="#00ff00"/>
<circle cx="461.300" cy="301.700" r="9.500" fill="#fff"/><circle cx="458.250" cy="287.200" r="1.400" fill="#fff"/>
<path d="M461.300 301.700l4.600-4.600a6.500 6.500 0 0 1-9.200 9.200z" fill="#00ff00"/>
<path d="M449.300 282.600l25.500 25.500" stroke="#fff" stroke-width="3"/>
<path d="M445.300 282.700l30.900 30.900" stroke="#00ff00" stroke-width="2.800"/>
<!-- radiator off (heizung) -->
<g fill="#00ff00"><path d="M535 301.200a3 3 0 0 1 3-3h26a3 3 0 0 1 3 3v13.400h-3.100v-3.300h-25.700v3.300H535z"/></g>
<g fill="#fff"><rect x="540.100" y="302" width="2.700" height="6.100"/><rect x="546.400" y="302" width="2.700" height="6.100"/><rect x="552.900" y="302" width="2.700" height="6.100"/></g>
<g stroke="#00ff00" stroke-width="2.600" stroke-linejoin="round"><path d="M551.500 282.700l-2.700 4.200 4.200 3.700-1.600 2.200M561.400 282.700l-2.800 4.400 4.300 3.600-3.600 4M542.200 290.400l-2.400 4"/></g>
<path d="M538.700 283.100l29.500 27.800" stroke="#fff" stroke-width="3"/>
<path d="M536 284.600l30.300 28.500" stroke="#00ff00" stroke-width="2.800"/>
<!-- washing machine -->
<rect x="535.900" y="391.800" width="25.400" height="32.200" rx="3" fill="#000"/><circle cx="548.700" cy="411.200" r="9.600" fill="#fff"/>
<circle cx="540.500" cy="396.900" r="1.600" fill="#fff"/><circle cx="545.500" cy="396.900" r="1.600" fill="#fff"/>
<path d="M544.100 415.400l9.300-8.400a6.260 6.260 0 0 1-9.300 8.400z" fill="#000"/>
<!-- dryer -->
<rect x="535.900" y="497.400" width="25.400" height="32.200" rx="3" fill="#000"/><circle cx="548.500" cy="517" r="9.500" fill="#fff"/>
<rect x="539" y="501.100" width="3.100" height="3" rx=".8" fill="#fff"/><rect x="544" y="501.100" width="3.100" height="3" rx=".8" fill="#fff"/>
<g stroke="#000" stroke-width="2.400"><path d="M543.700 511.300c-1.600 4.700 4.700 6.300 2.900 10.900M550.500 511.300c-1.600 4.700 4.700 6.300 2.900 10.600"/></g>
<!-- battery -->
<rect x="52.500" y="446.500" width="15.900" height="25.400" rx="1.200" stroke="#ff9500" stroke-width="3.200"/>
<g fill="#ff9500"><rect x="55.950" y="441.300" width="9.350" height="4.200"/><rect x="55.950" y="449.600" width="9.350" height="4.300"/><rect x="55.950" y="457" width="9.350" height="4.500"/><rect x="55.950" y="464.100" width="9.350" height="4.600"/></g>
<!-- home city -->
<g fill="#454545"><path d="M159.100 476.800l5.950-3.700 6.150 3.700v8.400h-4v-5.100h-4.250v5.100h-3.850z"/><path d="M167.300 470.600h10.500v14.600h-5v-9.300l-3.400-2.100v-1.300z"/></g>
<g fill="#fff"><rect x="174" y="473.600" width="2.100" height="1.700"/><rect x="174" y="477.100" width="2.100" height="1.700"/><rect x="174" y="480.100" width="2.100" height="1.700"/></g>
</svg>
<div style="position:absolute;left:292px;top:601.5px;width:126px;height:2.3px;background:#0a84ff;"></div>
<span style="position:absolute;top:609.92px;font-size:12.3px;line-height:14.76px;color:#15141a;white-space:pre;letter-spacing:-0.155px;left:63.3px;">Inspektor</span>
<span style="position:absolute;top:609.92px;font-size:12.3px;line-height:14.76px;color:#15141a;white-space:pre;letter-spacing:-0.465px;left:151.3px;">Konsole</span>
<span style="position:absolute;top:609.92px;font-size:12.3px;line-height:14.76px;color:#15141a;white-space:pre;letter-spacing:-0.189px;left:231.3px;">Debugger</span>
<span style="position:absolute;top:609.92px;font-size:12.3px;line-height:14.76px;color:#15141a;white-space:pre;letter-spacing:-0.136px;left:448.3px;">Stilbearbeitung</span>
<span style="position:absolute;top:609.92px;font-size:12.3px;line-height:14.76px;color:#15141a;white-space:pre;letter-spacing:-0.445px;left:567.5px;">Laufzeitanalyse</span>
<span style="position:absolute;top:609.92px;font-size:12.3px;line-height:14.76px;color:#15141a;white-space:pre;letter-spacing:-0.381px;left:685px;">Speicher</span>
<span style="position:absolute;top:609.92px;font-size:12.3px;line-height:14.76px;color:#15141a;white-space:pre;letter-spacing:-0.334px;left:768.8px;">Web-Speicher</span>
<span style="position:absolute;top:609.92px;font-size:12.3px;line-height:14.76px;color:#15141a;white-space:pre;letter-spacing:-0.197px;left:880.8px;">Barrierefreiheit</span>
<span style="position:absolute;top:609.92px;font-size:12.3px;line-height:14.76px;color:#15141a;white-space:pre;letter-spacing:-0.219px;left:997px;">Anwendung</span>
<span style="position:absolute;top:609.92px;font-size:12.3px;line-height:14.76px;color:#0060df;white-space:pre;letter-spacing:-0.376px;left:322px;">Netzwerkanalyse</span>
<span style="position:absolute;top:638.46px;font-size:11.4px;line-height:13.68px;color:#7b7b85;white-space:pre;letter-spacing:-0.386px;left:57.5px;">Adressen durchsuchen</span>
<div style="position:absolute;left:1188px;top:634.8px;width:33.8px;height:20px;background:#edf2fb;border-radius:3px;border-bottom:2px solid #0060df;box-sizing:border-box;"></div>
<span style="position:absolute;top:637.94px;font-size:11.6px;line-height:13.92px;color:#0060df;white-space:pre;letter-spacing:-0.528px;left:1193.8px;">Alles</span>
<span style="position:absolute;top:637.94px;font-size:11.6px;line-height:13.92px;color:#38383d;white-space:pre;letter-spacing:-0.816px;left:1230.5px;">HTML</span>
<span style="position:absolute;top:637.94px;font-size:11.6px;line-height:13.92px;color:#38383d;white-space:pre;letter-spacing:-1.848px;left:1273px;">CSS</span>
<span style="position:absolute;top:637.94px;font-size:11.6px;line-height:13.92px;color:#38383d;white-space:pre;letter-spacing:-2.016px;left:1305.5px;">JS</span>
<span style="position:absolute;top:637.94px;font-size:11.6px;line-height:13.92px;color:#38383d;white-space:pre;letter-spacing:-1.195px;left:1329.6px;">XHR</span>
<span style="position:absolute;top:637.94px;font-size:11.6px;line-height:13.92px;color:#38383d;white-space:pre;letter-spacing:-0.341px;left:1364.3px;">Schriften</span>
<span style="position:absolute;top:637.94px;font-size:11.6px;line-height:13.92px;color:#38383d;white-space:pre;letter-spacing:-0.454px;left:1421.2px;">Grafiken</span>
<span style="position:absolute;top:637.94px;font-size:11.6px;line-height:13.92px;color:#38383d;white-space:pre;letter-spacing:-0.339px;left:1476.2px;">Medien</span>
<span style="position:absolute;top:637.94px;font-size:11.6px;line-height:13.92px;color:#38383d;white-space:pre;letter-spacing:-0.608px;left:1526.7px;">WebSockets</span>
<span style="position:absolute;top:637.94px;font-size:11.6px;line-height:13.92px;color:#38383d;white-space:pre;letter-spacing:-0.514px;left:1599.7px;">Sonstiges</span>
<span style="position:absolute;top:637.94px;font-size:11.6px;line-height:13.92px;color:#38383d;white-space:pre;letter-spacing:-0.458px;left:1686.5px;">Cache deaktivieren</span>
<span style="position:absolute;top:637.94px;font-size:11.6px;line-height:13.92px;color:#38383d;white-space:pre;letter-spacing:-0.514px;left:1791.3px;">Keine Drosselung</span>
<div style="position:absolute;left:32.0px;top:635px;width:1px;height:20px;background:#e0e0e2;"></div>
<div style="position:absolute;left:1062.8px;top:635px;width:1px;height:20px;background:#e0e0e2;"></div>
<div style="position:absolute;left:1177.8px;top:635px;width:1px;height:20px;background:#e0e0e2;"></div>
<div style="position:absolute;left:1661.2px;top:635px;width:1px;height:20px;background:#e0e0e2;"></div>
<div style="position:absolute;left:1786.0px;top:635px;width:1px;height:20px;background:#e0e0e2;"></div>
<div style="position:absolute;left:1887.3px;top:635px;width:1px;height:20px;background:#e0e0e2;"></div>
<div style="position:absolute;left:32px;top:606px;width:1px;height:20px;background:#e0e0e2;"></div>
<div style="position:absolute;left:1669px;top:637.2px;width:13.6px;height:13.6px;border:1px solid #8f8f9d;border-radius:2.5px;box-sizing:border-box;background:#fff;"></div>
<span style="position:absolute;top:679.2px;font-size:13px;line-height:15.6px;color:#15141a;white-space:pre;left:13px;">•</span>
<span style="position:absolute;top:679.14px;font-size:13.1px;line-height:15.72px;color:#15141a;white-space:pre;letter-spacing:-0.062px;left:21.3px;">Starten Sie eine Anfrage oder</span>
<div style="position:absolute;left:196.3px;top:672.3px;width:45.5px;height:27.2px;background:#f7f7f9;border:1px solid #e3e3e8;border-radius:3px;box-sizing:border-box;"></div>
<span style="position:absolute;top:679.14px;font-size:13.1px;line-height:15.72px;color:#15141a;white-space:pre;letter-spacing:-0.169px;left:203.8px;">laden</span>
<span style="position:absolute;top:679.14px;font-size:13.1px;line-height:15.72px;color:#15141a;white-space:pre;letter-spacing:0.036px;left:247.5px;">Sie die Seite neu, um detaillierte Informationen über die Netzwerkaktivität angezeigt zu bekommen.</span>
<span style="position:absolute;top:719.2px;font-size:13px;line-height:15.6px;color:#15141a;white-space:pre;left:13px;">•</span>
<span style="position:absolute;top:719.14px;font-size:13.1px;line-height:15.72px;color:#15141a;white-space:pre;letter-spacing:0.062px;left:21.3px;">Auf die</span>
<div style="position:absolute;left:68.3px;top:714px;width:35.5px;height:27.5px;background:#f7f7f9;border:1px solid #e3e3e8;border-radius:3px;box-sizing:border-box;"></div>
<span style="position:absolute;top:719.14px;font-size:13.1px;line-height:15.72px;color:#15141a;white-space:pre;letter-spacing:-0.080px;left:109.3px;">-Schaltfläche klicken, um die Netzwerkanalyse zu starten.</span>
<span style="position:absolute;top:896.34px;font-size:11.6px;line-height:13.92px;color:#15141a;white-space:pre;letter-spacing:-0.400px;left:39.3px;">Keine Anfragen</span>
<div style="position:absolute;left:32px;top:921px;width:1px;height:19px;background:#e0e0e2;"></div>
<span style="position:absolute;top:923.96px;font-size:11.4px;line-height:13.68px;color:#7b7b85;white-space:pre;letter-spacing:-0.200px;left:58.3px;">Ausgabe filtern</span>
<div style="position:absolute;left:1450px;top:919.3px;width:42px;height:20.2px;background:#edf2fb;border-radius:3px;border-bottom:2px solid #0060df;box-sizing:border-box;"></div>
<span style="position:absolute;top:922.84px;font-size:11.6px;line-height:13.92px;color:#0060df;white-space:pre;letter-spacing:-0.596px;left:1456.5px;">Fehler</span>
<div style="position:absolute;left:1494px;top:919.3px;width:68px;height:20.2px;background:#edf2fb;border-radius:3px;border-bottom:2px solid #0060df;box-sizing:border-box;"></div>
<span style="position:absolute;top:922.84px;font-size:11.6px;line-height:13.92px;color:#0060df;white-space:pre;letter-spacing:-0.357px;left:1500px;">Warnungen</span>
<div style="position:absolute;left:1564px;top:919.3px;width:81px;height:20.2px;background:#edf2fb;border-radius:3px;border-bottom:2px solid #0060df;box-sizing:border-box;"></div>
<span style="position:absolute;top:922.84px;font-size:11.6px;line-height:13.92px;color:#0060df;white-space:pre;letter-spacing:-0.170px;left:1570.3px;">Informationen</span>
<div style="position:absolute;left:1647px;top:919.3px;width:30px;height:20.2px;background:#edf2fb;border-radius:3px;border-bottom:2px solid #0060df;box-sizing:border-box;"></div>
<span style="position:absolute;top:922.84px;font-size:11.6px;line-height:13.92px;color:#0060df;white-space:pre;letter-spacing:-0.448px;left:1653.3px;">Log</span>
<div style="position:absolute;left:1679px;top:919.3px;width:45px;height:20.2px;background:#edf2fb;border-radius:3px;border-bottom:2px solid #0060df;box-sizing:border-box;"></div>
<span style="position:absolute;top:922.84px;font-size:11.6px;line-height:13.92px;color:#0060df;white-space:pre;letter-spacing:-0.334px;left:1685.3px;">Debug</span>
<span style="position:absolute;top:922.84px;font-size:11.6px;line-height:13.92px;color:#38383d;white-space:pre;letter-spacing:-1.881px;left:1743.3px;">CSS</span>
<span style="position:absolute;top:922.84px;font-size:11.6px;line-height:13.92px;color:#38383d;white-space:pre;letter-spacing:-1.095px;left:1775.3px;">XHR</span>
<span style="position:absolute;top:922.84px;font-size:11.6px;line-height:13.92px;color:#38383d;white-space:pre;letter-spacing:-0.358px;left:1810.3px;">Anfragen</span>
<div style="position:absolute;left:1444.0px;top:920px;width:1px;height:20px;background:#e0e0e2;"></div>
<div style="position:absolute;left:1730.3px;top:920px;width:1px;height:20px;background:#e0e0e2;"></div>
<div style="position:absolute;left:1863.3px;top:920px;width:1px;height:20px;background:#e0e0e2;"></div>
<div style="position:absolute;left:147px;top:944.6px;width:296px;height:1.2px;background:#5c4a10;"></div>
<span style="position:absolute;top:948.74px;font-size:10.1px;line-height:12.12px;color:#715100;white-space:pre;font-family:'Liberation Mono', 'DejaVu Sans Mono', monospace;letter-spacing:-0.073px;left:26.3px;">Source-Map-Adresse:</span>
<span style="position:absolute;top:948.74px;font-size:10.1px;line-height:12.12px;color:#5c4500;white-space:pre;font-family:'Liberation Mono', 'DejaVu Sans Mono', monospace;letter-spacing:-0.058px;left:147px;">socket.io.js.map</span>
<span style="position:absolute;top:948.74px;font-size:10.1px;line-height:12.12px;color:#0060df;white-space:pre;font-family:'Liberation Mono', 'DejaVu Sans Mono', monospace;left:250.5px;">[</span>
<span style="position:absolute;top:948.74px;font-size:10.1px;line-height:12.12px;color:#0060df;white-space:pre;font-family:'Liberation Mono', 'DejaVu Sans Mono', monospace;letter-spacing:-0.043px;left:256.5px;text-decoration:underline;text-decoration-thickness:1px;text-underline-offset:1px;">Weitere Informationen</span>
<span style="position:absolute;top:948.74px;font-size:10.1px;line-height:12.12px;color:#0060df;white-space:pre;font-family:'Liberation Mono', 'DejaVu Sans Mono', monospace;left:382.8px;">]</span>
<svg style="left:0;top:596px" width="1916" height="401" viewBox="0 596 1916 401" fill="none" stroke="#2a2a2e" stroke-width="1.300" stroke-linecap="round" stroke-linejoin="round">
<!-- pick element -->
<path d="M20.500 610.500h-9.500a2.200 2.200 0 0 0-2.200 2.200v7.600a2.200 2.200 0 0 0 2.200 2.200h3.500" stroke-width="1.500"/><path d="M16 614l2.400 9 1.900-3.200 3 3 1.400-1.400-3-3 3.200-1.900z" fill="#2a2a2e" stroke-width=".8"/>
<!-- inspector -->
<rect x="43.800" y="611.500" width="9.800" height="9.800" rx="1.800" stroke-width="1.500"/><path d="M48.700 609v2.500M48.700 621.300v2.500M41 616.400h2.800M53.600 616.400h2.800" stroke-width="1.300"/>
<!-- console -->
<rect x="129.800" y="610.300" width="14" height="12" rx="2" stroke-width="1.500"/><path d="M133.600 613.800l2.700 2.500-2.700 2.500" stroke-width="1.300"/>
<!-- debugger -->
<path d="M210.300 610.800h8.300l3.800 5.500-3.800 5.500h-8.300a1.600 1.600 0 0 1-1.600-1.600v-7.800a1.600 1.600 0 0 1 1.600-1.600z" stroke-width="1.500"/>
<!-- network arrows -->
<g stroke="#0060df" stroke-width="1.600"><path d="M304 622.500v-12M300.600 613.700l3.400-3.600 3.400 3.600M311.600 610v12M308.200 618.600l3.400 3.600 3.400-3.600"/></g>
<!-- style editor {} -->
<g stroke-width="1.500"><path d="M431.500 610.300c-1.800 0-2.300.800-2.300 2v2c0 1.200-.7 1.900-2 2 1.300.100 2 .800 2 2v2c0 1.200.5 2 2.300 2M436 610.300c1.800 0 2.300.800 2.300 2v2c0 1.200.7 1.900 2 2-1.300.100-2 .800-2 2v2c0 1.200-.5 2-2.300 2"/></g>
<!-- performance gauge -->
<path d="M547.600 621.500a6.500 6.500 0 1 1 10.700 0" stroke-width="1.900"/><circle cx="552.500" cy="620" r="1.700" fill="#2a2a2e" stroke="none"/><path d="M552.800 619.500l2.400-4.500" stroke-width="1.400"/>
<!-- memory chip -->
<rect x="666.300" y="610.300" width="8.500" height="12.200" rx="2" stroke-width="1.500"/><path d="M663 612.600h1.800M663 615.300h1.800M663 618h1.800M663 620.600h1.800M676.300 612.600h1.800M676.300 615.300h1.800M676.300 618h1.800M676.300 620.600h1.800" stroke-width="1.100"/>
<!-- storage -->
<rect x="747.800" y="609.800" width="12.200" height="13.200" rx="2" stroke-width="1.500"/><path d="M747.800 616.300h12.200M750.800 613h4M750.800 619.600h4" stroke-width="1.300"/>
<!-- accessibility -->
<g fill="#2a2a2e" stroke="none"><circle cx="867" cy="610.800" r="1.900"/><path d="M860.300 613.600h13.400v2.300h-4.400v7.800h-2v-3.700h-.600v3.700h-2v-7.800h-4.400z"/></g>
<!-- application grid -->
<g stroke-width="1"><circle cx="978" cy="611.600" r="1.500"/><circle cx="983" cy="611.600" r="1.500"/><circle cx="988" cy="611.600" r="1.500"/><circle cx="978" cy="616.600" r="1.500"/><circle cx="983" cy="616.600" r="1.500"/><circle cx="988" cy="616.600" r="1.500"/><circle cx="978" cy="621.600" r="1.500"/><circle cx="983" cy="621.600" r="1.500"/><circle cx="988" cy="621.600" r="1.500"/></g>
<!-- responsive / more / close -->
<path d="M1851.500 610h8.200a1.600 1.600 0 0 1 1.600 1.600v10.400a1.600 1.600 0 0 1-1.600 1.600h-3.500" stroke-width="1.500"/><rect x="1847.400" y="614" width="6.300" height="9.600" rx="1.400" stroke-width="1.500"/>
<g fill="#2a2a2e" stroke="none"><circle cx="1875" cy="616.300" r="1.500"/><circle cx="1881" cy="616.300" r="1.500"/><circle cx="1887" cy="616.300" r="1.500"/></g>
<path d="M1902 611.400l10 10M1912 611.400l-10 10" stroke-width="1.500"/>
<!-- trash x2 -->
<g stroke-width="1.500"><path d="M10.500 641.500h12M13.800 641.300v-1.600a1.200 1.200 0 0 1 1.200-1.200h3a1.200 1.200 0 0 1 1.200 1.200v1.600M12 641.800l.6 10.400a1.700 1.700 0 0 0 1.700 1.600h4.400a1.700 1.700 0 0 0 1.700-1.600l.6-10.400"/><path d="M14.900 644.500v6.500M18.100 644.500v6.500" stroke-width="1.200"/></g>
<g stroke-width="1.500" transform="translate(0,285)"><path d="M10.500 641.500h12M13.800 641.300v-1.600a1.200 1.200 0 0 1 1.200-1.200h3a1.200 1.200 0 0 1 1.200 1.200v1.600M12 641.800l.6 10.400a1.700 1.700 0 0 0 1.700 1.600h4.400a1.700 1.700 0 0 0 1.700-1.600l.6-10.400"/><path d="M14.900 644.500v6.500M18.100 644.500v6.500" stroke-width="1.200"/></g>
<!-- funnels -->
<path d="M43.600 641h8.800l-3.400 4.300v4.700l-2-.9v-3.800z" stroke="#7b7b85" stroke-width="1"/>
<path d="M43.600 641h8.800l-3.400 4.300v4.700l-2-.9v-3.800z" stroke="#7b7b85" stroke-width="1" transform="translate(1,285)"/>
<!-- pause, plus, search, block -->
<path d="M1075.800 640.700v8.500M1082.300 640.700v8.500" stroke-width="1" stroke-linecap="butt"/>
<path d="M1101 645.300h11M1106.500 639.800v11" stroke-width="1.500"/>
<circle cx="1132.800" cy="643.600" r="4" stroke-width="1.600"/><path d="M1135.800 646.800l4.500 4.500" stroke-width="1.800"/>
<circle cx="1163" cy="645.500" r="5.200" stroke-width="1.700"/><path d="M1159.400 641.900l7.200 7.200" stroke-width="1.700"/>
<!-- throttle arrows -->
<g fill="#2a2a2e" stroke="none"><path d="M1878.800 644.500l2.400-3 2.400 3zM1878.800 647l2.400 3 2.400-3z"/></g>
<!-- gears -->
<g transform="translate(1903,646.300)"><circle r="3.700" stroke-width="1.700"/><path d="M0-7.600v2.600M0 7.600v-2.600M7.600 0h-2.600M-7.600 0h2.600M5.400-5.400l-1.800 1.800M-5.400 5.400l1.800-1.800M5.400 5.400l-1.800-1.800M-5.400-5.400l1.800 1.800" stroke-width="1.800"/></g>
<g transform="translate(1878,931.200)"><circle r="3.700" stroke-width="1.700"/><path d="M0-7.600v2.600M0 7.600v-2.600M7.600 0h-2.600M-7.600 0h2.600M5.400-5.400l-1.800 1.800M-5.400 5.400l1.800-1.800M5.400 5.400l-1.800-1.800M-5.400-5.400l1.800 1.800" stroke-width="1.800"/></g>
<path d="M1902 926l10 10M1912 926l-10 10" stroke-width="1.500"/>
<!-- stopwatch in button, status bar -->
<g><circle cx="86" cy="729.500" r="5.300" stroke-width="1.600"/><path d="M83.600 722.300h4.800" stroke-width="1.800"/><path d="M86 729.500l2.400-2.600" stroke-width="1.200"/></g>
<g><circle cx="17" cy="904" r="5.800" stroke-width="1.600"/><path d="M14.300 896.200h5.400" stroke-width="1.900"/><path d="M17 904l2.700-2.900" stroke-width="1.200"/></g>
<!-- help circle -->
<circle cx="453.200" cy="728.200" r="6.300" stroke-width="1.200"/><path d="M451.300 726.600a1.900 1.900 0 1 1 2.900 1.600c-.7.400-1 .8-1 1.600" stroke-width="1.200"/><circle cx="453.200" cy="731.600" r=".7" fill="#2a2a2e" stroke="none"/>
<!-- console prompt chevrons (clipped) -->
<path d="M12.500 973.200l3 3.400M17.700 973.200l3 3.400" stroke="#0060df" stroke-width="1.500"/>
<!-- bottom-right split console icon -->
<path d="M1899.500 977v-3.600a2.200 2.200 0 0 1 2.200-2.200h14.300" stroke-width="1.600"/><path d="M1902.500 974.800h4" stroke-width="1.200"/><circle cx="1913.300" cy="971.800" r="2.600" fill="#0a84ff" stroke="none"/>
</svg>
</body></html>
